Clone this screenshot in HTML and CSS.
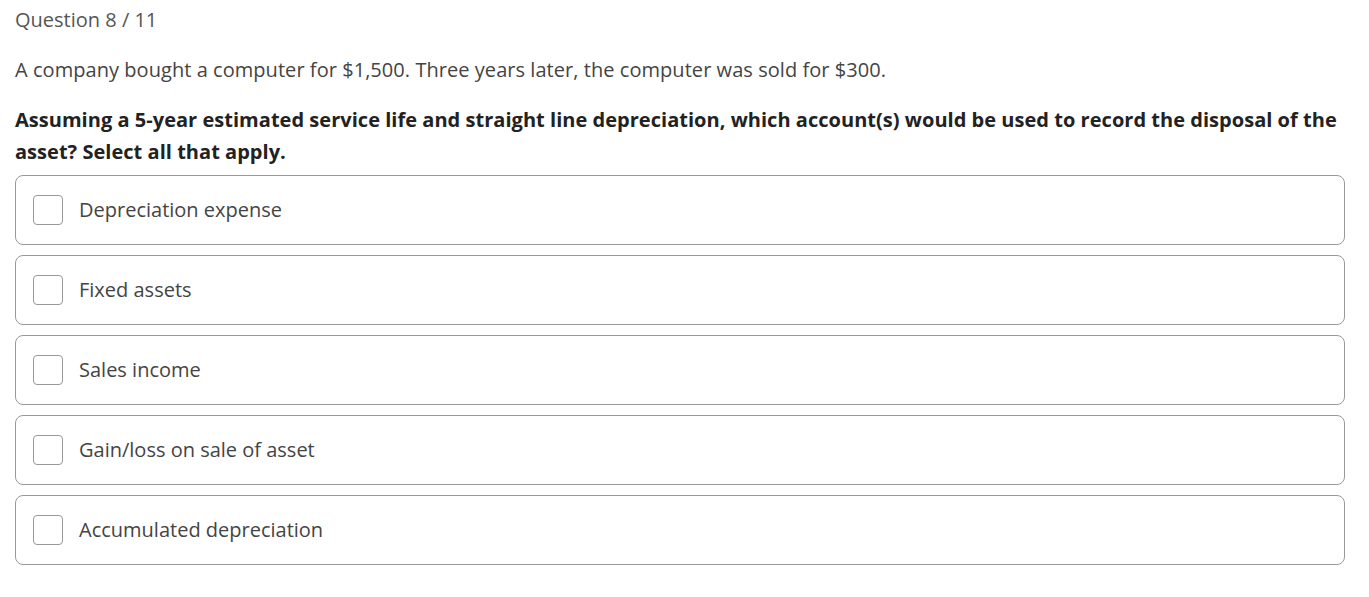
FILE: index.html
```html
<!DOCTYPE html>
<html>
<head>
<meta charset="utf-8">
<link rel="stylesheet" href="styles.css">
</head>
<body>
<div class="quiz">
  <div class="counter">Question 8 / 11</div>
  <p class="stem">A company bought a computer for $1,500. Three years later, the computer was sold for $300.</p>
  <p class="prompt">Assuming a 5-year estimated service life and straight line depreciation, which account(s) would be used to record the disposal of the asset? Select all that apply.</p>
  <div class="options">
    <label class="option"><span class="box"></span><span class="text">Depreciation expense</span></label>
    <label class="option"><span class="box"></span><span class="text">Fixed assets</span></label>
    <label class="option"><span class="box"></span><span class="text">Sales income</span></label>
    <label class="option"><span class="box"></span><span class="text">Gain/loss on sale of asset</span></label>
    <label class="option"><span class="box"></span><span class="text">Accumulated depreciation</span></label>
  </div>
</div>
</body>
</html>
```
FILE: styles.css
```css
html, body {
  margin: 0;
  padding: 0;
  background: #fff;
}
body {
  font-family: "Open Sans", "Liberation Sans", sans-serif;
}
.quiz {
  padding: 0 24px 0 15px;
}
.counter {
  font-size: 20px;
  line-height: 40px;
  color: #555;
}
.stem {
  margin: 14px 0 0;
  font-size: 20px;
  line-height: 32px;
  color: #444;
  letter-spacing: 0.05px;
}
.prompt {
  margin: 18px 0 0;
  font-size: 20px;
  line-height: 32px;
  font-weight: 700;
  color: #222;
  letter-spacing: 0.03px;
}
.options {
  margin-top: 7px;
  display: flex;
  flex-direction: column;
  gap: 10px;
}
.option {
  display: flex;
  align-items: center;
  height: 70px;
  box-sizing: border-box;
  border: 1px solid #999;
  border-radius: 8px;
  padding-left: 17px;
  gap: 16px;
}
.box {
  width: 30px;
  height: 30px;
  box-sizing: border-box;
  border: 1px solid #999;
  border-radius: 4px;
  flex: none;
}
.text {
  font-size: 20px;
  line-height: 28px;
  color: #444;
}
```
